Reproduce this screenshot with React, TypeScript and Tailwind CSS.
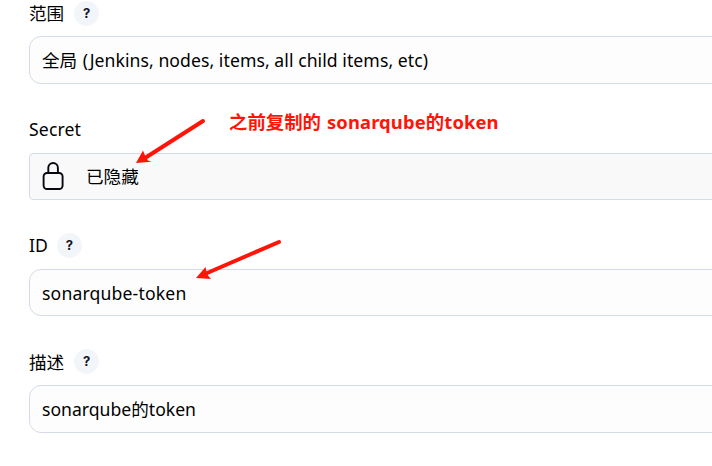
import type { ReactNode } from "react";

function Help() {
  return (
    <span className="flex size-[25px] items-center justify-center rounded-full bg-[#f2f6fa] font-['Inter'] text-[13px] leading-none font-bold text-[#14141f]">
      ?
    </span>
  );
}

function Label({ children, className }: { children: ReactNode; className: string }) {
  return <div className={`flex items-center leading-[25px] ${className}`}>{children}</div>;
}

function Arrow({ d, head }: { d: string; head: string }) {
  return (
    <>
      <path d={d} stroke="#ff1508" strokeWidth="4" strokeLinecap="round" />
      <path d={head} fill="#ff1508" />
    </>
  );
}

export default function App() {
  return (
    <main className="relative h-[466px] w-[712px] overflow-hidden bg-white pl-[29px] font-['Noto_Sans','Noto_Sans_CJK_SC',sans-serif] text-[17.6px] whitespace-nowrap text-black">
      <section className="pt-px">
        <Label className="gap-[10px]">
          <span className="-mt-px font-['Noto_Sans_CJK_SC',sans-serif] leading-[24px]">范围</span>
          <Help />
        </Label>
        <div className="mt-[10px] flex h-12 w-[720px] items-center rounded-xl border border-[#d5dbe8] bg-[#fdfdfd] pl-3">
          <span>全局</span>
          <span className="ml-[5.5px] tracking-[0.07px]">(Jenkins, nodes, items, all child items, etc)</span>
        </div>
      </section>
      <section className="pt-[33px]">
        <Label className="tracking-[0.15px]">Secret</Label>
        <div className="mt-[11px] flex h-[47px] w-[720px] items-center rounded-[4px] border border-[#d5dbe8] bg-[#f9f9f9] pl-3">
          <svg className="mb-px h-[30px] w-[23px]" viewBox="0 0 23 30" fill="none" stroke="#080811" strokeWidth="1.9">
            <rect x="1.6" y="12" width="19" height="16" rx="3.5" />
            <path d="M6.3 12V6.8a4.8 4.8 0 0 1 9.6 0V12" />
          </svg>
          <span className="ml-[21px]">已隐藏</span>
        </div>
      </section>
      <section className="pt-[33px]">
        <Label className="gap-[10px]">
          <span className="w-[18px]">ID</span>
          <Help />
        </Label>
        <div className="mt-[11px] flex h-[47px] w-[720px] items-center rounded-xl border border-[#d5dbe8] bg-[#fdfdfd] pt-px pl-3">
          <span className="tracking-[0.16px]">sonarqube-token</span>
        </div>
      </section>
      <section className="pt-[33px]">
        <Label className="gap-[10px]">
          <span className="font-['Noto_Sans_CJK_SC',sans-serif] leading-[24px]">描述</span>
          <Help />
        </Label>
        <div className="mt-[11px] flex h-12 w-[720px] items-center rounded-xl border border-[#d5dbe8] bg-[#fdfdfd] pl-3">
          <span>sonarqube</span>
          <span>的</span>
          <span>token</span>
        </div>
      </section>
      <div className="absolute top-[109px] left-[229px] flex text-[18.4px] leading-[26px] font-bold text-[#ff1508]">
        <span>之前复制的</span>
        <span className="ml-[6px] tracking-[0.12px]">sonarqube的token</span>
      </div>
      <svg className="pointer-events-none absolute inset-0" width="712" height="466" fill="none">
        <Arrow d="M203 121L145 158" head="M136 163L143 150.5L145 155.5L148 160.5L151.5 161.8Z" />
        <Arrow d="M279 242L206 273.5" head="M196 278L205.5 267L206.5 271.5L208 275.5L211 279Z" />
      </svg>
    </main>
  );
}
